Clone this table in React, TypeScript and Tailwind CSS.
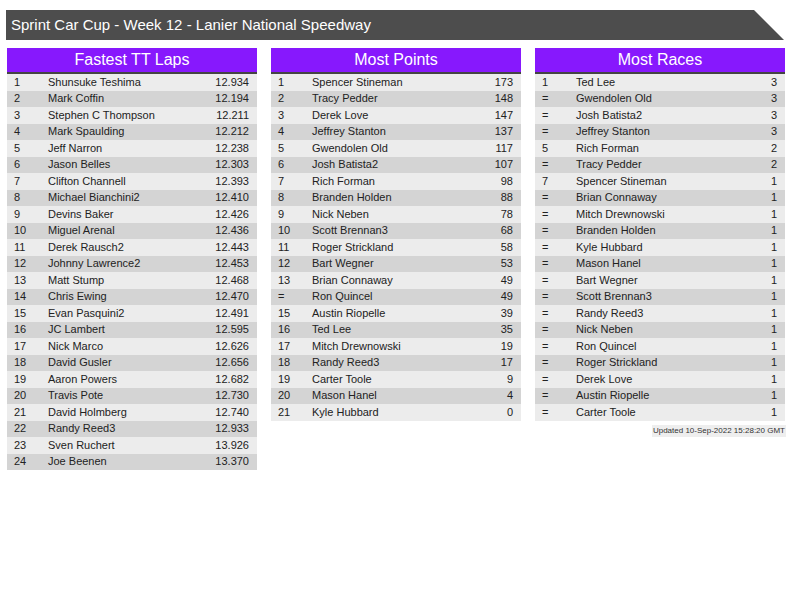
type Row = [string, string, string];

const laps: Row[] = [
  ["1", "Shunsuke Teshima", "12.934"],
  ["2", "Mark Coffin", "12.194"],
  ["3", "Stephen C Thompson", "12.211"],
  ["4", "Mark Spaulding", "12.212"],
  ["5", "Jeff Narron", "12.238"],
  ["6", "Jason Belles", "12.303"],
  ["7", "Clifton Channell", "12.393"],
  ["8", "Michael Bianchini2", "12.410"],
  ["9", "Devins Baker", "12.426"],
  ["10", "Miguel Arenal", "12.436"],
  ["11", "Derek Rausch2", "12.443"],
  ["12", "Johnny Lawrence2", "12.453"],
  ["13", "Matt Stump", "12.468"],
  ["14", "Chris Ewing", "12.470"],
  ["15", "Evan Pasquini2", "12.491"],
  ["16", "JC Lambert", "12.595"],
  ["17", "Nick Marco", "12.626"],
  ["18", "David Gusler", "12.656"],
  ["19", "Aaron Powers", "12.682"],
  ["20", "Travis Pote", "12.730"],
  ["21", "David Holmberg", "12.740"],
  ["22", "Randy Reed3", "12.933"],
  ["23", "Sven Ruchert", "13.926"],
  ["24", "Joe Beenen", "13.370"],
];

const points: Row[] = [
  ["1", "Spencer Stineman", "173"],
  ["2", "Tracy Pedder", "148"],
  ["3", "Derek Love", "147"],
  ["4", "Jeffrey Stanton", "137"],
  ["5", "Gwendolen Old", "117"],
  ["6", "Josh Batista2", "107"],
  ["7", "Rich Forman", "98"],
  ["8", "Branden Holden", "88"],
  ["9", "Nick Neben", "78"],
  ["10", "Scott Brennan3", "68"],
  ["11", "Roger Strickland", "58"],
  ["12", "Bart Wegner", "53"],
  ["13", "Brian Connaway", "49"],
  ["=", "Ron Quincel", "49"],
  ["15", "Austin Riopelle", "39"],
  ["16", "Ted Lee", "35"],
  ["17", "Mitch Drewnowski", "19"],
  ["18", "Randy Reed3", "17"],
  ["19", "Carter Toole", "9"],
  ["20", "Mason Hanel", "4"],
  ["21", "Kyle Hubbard", "0"],
];

const races: Row[] = [
  ["1", "Ted Lee", "3"],
  ["=", "Gwendolen Old", "3"],
  ["=", "Josh Batista2", "3"],
  ["=", "Jeffrey Stanton", "3"],
  ["5", "Rich Forman", "2"],
  ["=", "Tracy Pedder", "2"],
  ["7", "Spencer Stineman", "1"],
  ["=", "Brian Connaway", "1"],
  ["=", "Mitch Drewnowski", "1"],
  ["=", "Branden Holden", "1"],
  ["=", "Kyle Hubbard", "1"],
  ["=", "Mason Hanel", "1"],
  ["=", "Bart Wegner", "1"],
  ["=", "Scott Brennan3", "1"],
  ["=", "Randy Reed3", "1"],
  ["=", "Nick Neben", "1"],
  ["=", "Ron Quincel", "1"],
  ["=", "Roger Strickland", "1"],
  ["=", "Derek Love", "1"],
  ["=", "Austin Riopelle", "1"],
  ["=", "Carter Toole", "1"],
];

function Board({ title, rows }: { title: string; rows: Row[] }) {
  return (
    <div className="w-[250px]">
      <div className="flex h-[26px] items-center justify-center border-b-2 border-[#444] bg-[#8718fd] text-[16px] leading-none text-white">
        {title}
      </div>
      {rows.map(([pos, name, value], i) => (
        <div
          key={i}
          className={`flex h-[16.5px] items-center text-[11px] leading-none text-[#222] ${
            i % 2 === 0 ? "bg-[#ececec]" : "bg-[#d4d4d4]"
          }`}
        >
          <span className="w-[41px] pl-[7px]">{pos}</span>
          <span className="flex-1">{name}</span>
          <span className="pr-[8px]">{value}</span>
        </div>
      ))}
    </div>
  );
}

export default function App() {
  return (
    <div className="min-h-[600px] bg-white pt-[10px] font-['Liberation_Sans',Arial,sans-serif]">
      <div className="ml-[6px] flex h-[30px] w-[778px] items-center bg-[#4d4d4d] pl-[5px] text-[15px] text-white [clip-path:polygon(0_0,748px_0,100%_100%,0_100%)]">
        Sprint Car Cup - Week 12 - Lanier National Speedway
      </div>
      <div className="mt-[8px] flex gap-[14px] pl-[7px]">
        <Board title="Fastest TT Laps" rows={laps} />
        <Board title="Most Points" rows={points} />
        <div className="flex w-[250px] flex-col">
          <Board title="Most Races" rows={races} />
          <div className="mt-[4px] flex justify-end">
            <span className="-mr-[1px] bg-[#eeeeee] px-[1px] text-[8px] leading-[12px] text-[#333]">
              Updated 10-Sep-2022 15:28:20 GMT
            </span>
          </div>
        </div>
      </div>
    </div>
  );
}
